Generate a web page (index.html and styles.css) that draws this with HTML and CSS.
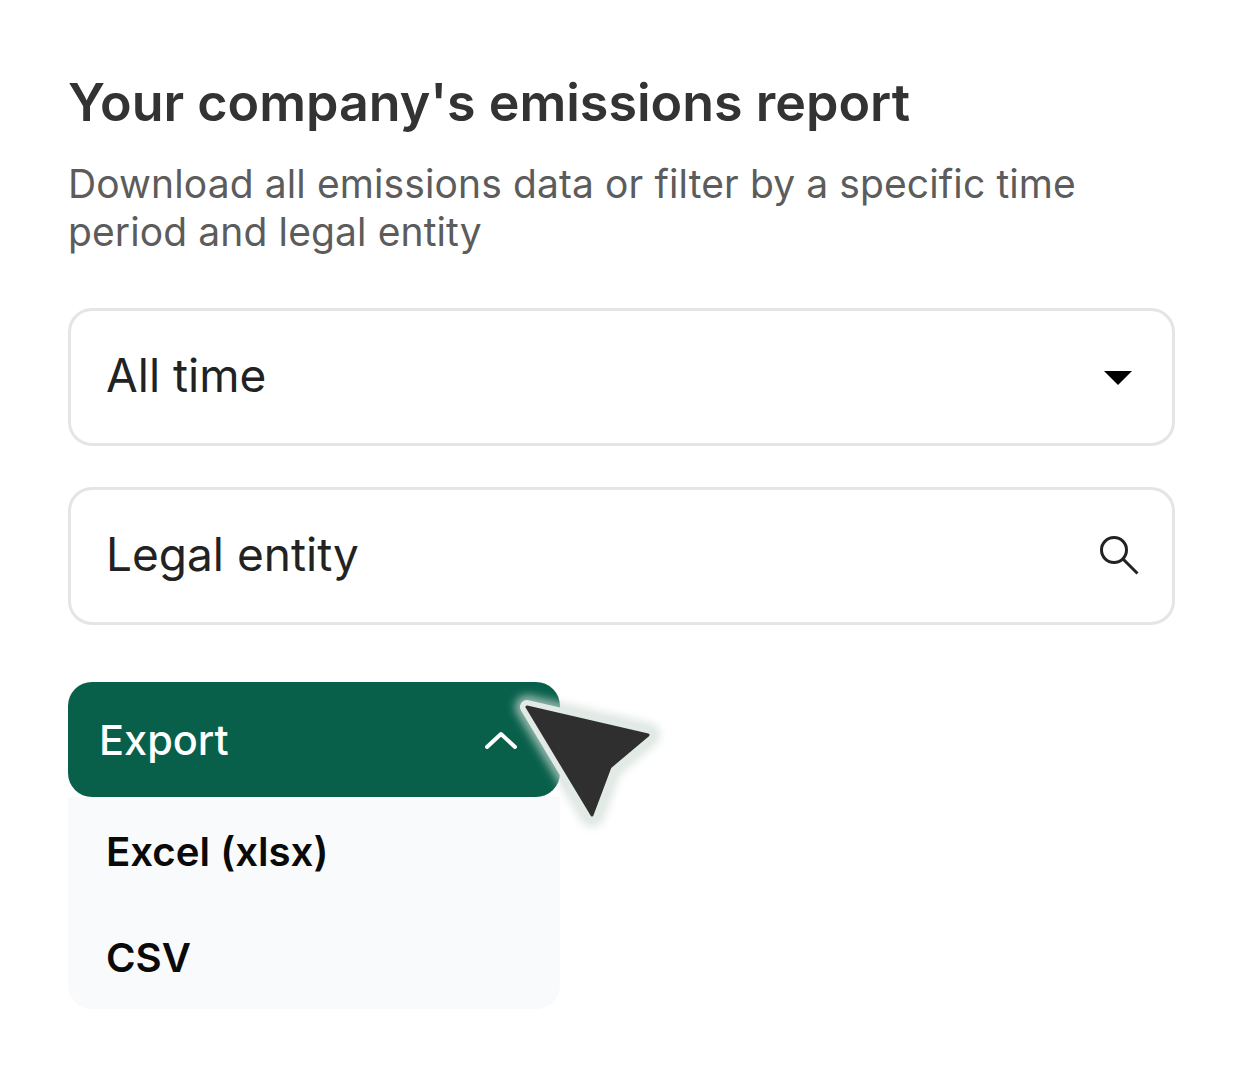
FILE: index.html
```html
<!DOCTYPE html>
<html lang="en">
<head>
<meta charset="utf-8">
<title>Emissions report</title>
<link rel="stylesheet" href="styles.css">
</head>
<body>
<main class="card">
  <h1 class="title">Your company's emissions report</h1>
  <p class="subtitle">Download all emissions data or filter by a specific time period and legal entity</p>
  <div class="field field-first">
    <span>All time</span>
    <svg class="caret" width="28" height="14" viewBox="0 0 28 14"><path d="M0 0H28L14 14Z" fill="#000"/></svg>
  </div>
  <div class="field field-second">
    <span>Legal entity</span>
    <svg class="search" width="40" height="40" viewBox="0 0 40 40" fill="none" stroke="#222" stroke-width="3"><circle cx="15" cy="15" r="12.500"/><path d="M24 24L38.500 38.500"/></svg>
  </div>
  <div class="export">
    <div class="export-btn">
      <span>Export</span>
      <svg width="32" height="20" viewBox="0 0 32 20" fill="none" stroke="#fff" stroke-width="4" stroke-linecap="round" stroke-linejoin="round"><path d="M2 17L16 4L30 17"/></svg>
    </div>
    <div class="menu">
      <div class="item">Excel (xlsx)</div>
      <div class="item">CSV</div>
    </div>
    <svg class="pointer" width="150" height="130" viewBox="0 0 150 130">
      <defs><filter id="glow" x="-20%" y="-20%" width="140%" height="140%"><feGaussianBlur stdDeviation="4"/></filter></defs>
      <path d="M10 13L131 41L93 73L75 121Z" fill="#d0dbd6" opacity=".7" stroke="#d0dbd6" stroke-width="24" stroke-linejoin="round" filter="url(#glow)"/>
      <path d="M10 13L131 41L93 73L75 121Z" fill="#2f2f2f" stroke="#e2eae6" stroke-width="14" stroke-linejoin="round"/>
      <path d="M10 13L131 41L93 73L75 121Z" fill="#2f2f2f" stroke="#2f2f2f" stroke-width="3" stroke-linejoin="round"/>
    </svg>
  </div>
</main>
</body>
</html>
```
FILE: styles.css
```css
* { box-sizing: border-box; }
html, body { margin: 0; background: #fff; }
body { font-family: Inter, "Liberation Sans", sans-serif; }
.card { width: 1254px; height: 1080px; padding: 73px 80px 0 68px; }
.title { margin: 0; font-size: 52px; line-height: 60px; font-weight: 600; color: #333; white-space: nowrap; }
.subtitle { margin: 27px 0 0; width: 1040px; font-size: 39px; line-height: 48px; font-weight: 400; letter-spacing: .11px; color: #5c5c5c; }
.field { display: flex; align-items: center; justify-content: space-between; width: 1107px; height: 138px; padding: 0 33px 4px 35px; border: 3px solid #e5e5e5; border-radius: 24px; font-size: 46px; color: #222; background: #fff; }
.field-first { margin-top: 52px; }
.field-second { margin-top: 41px; }
.caret { margin: 6px 7px 0 0; }
.search { margin-top: 2px; }
.export { position: relative; width: 492px; margin-top: 57px; }
.export-btn { display: flex; align-items: center; justify-content: space-between; height: 115px; padding: 0 43px 0 31px; border-radius: 24px; background: #08604b; color: #fff; font-size: 41.500px; font-weight: 500; position: relative; }
.menu { height: 212px; background: #f9fafc; border-radius: 0 0 24px 24px; padding-left: 38px; }
.item { height: 106px; padding-top: 2px; display: flex; align-items: center; font-size: 40.200px; font-weight: 600; color: #0a0a0a; }
.pointer { position: absolute; left: 449px; top: 12px; overflow: visible; }
```
